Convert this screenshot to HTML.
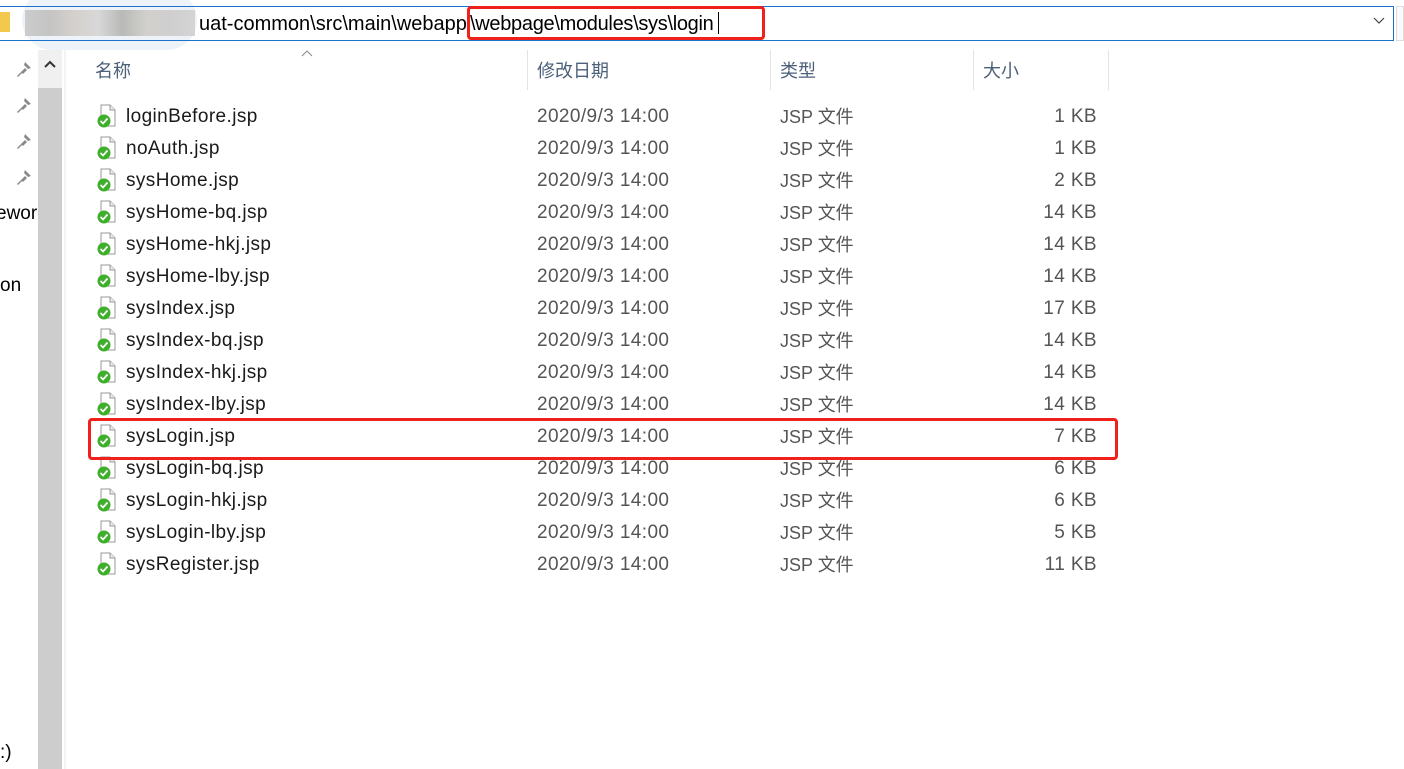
<!DOCTYPE html>
<html><head><meta charset="utf-8"><style>
*{margin:0;padding:0;box-sizing:border-box}
body{width:1404px;height:769px;overflow:hidden;background:#fff;font-family:"Liberation Sans","Noto Sans CJK SC",sans-serif;position:relative;color:#000}
.abs{position:absolute}
.addr{left:-2px;top:6px;width:1396px;height:35px;border:1px solid #1a73c9;border-left:none}
.t{font-size:20px;white-space:nowrap;line-height:24px}
.hdr{color:#4d6079;font-size:18px;top:59px;line-height:24px}
.sep{top:50px;width:1px;height:40px;background:#e3e3e3}
.row{position:absolute;left:0;height:32px;font-size:19px;letter-spacing:0.4px;color:#1a1a1a}
.row span{position:absolute;top:5px;white-space:nowrap;line-height:24px}
.ic{position:absolute;left:97px;top:4px;width:20px;height:24px}
</style></head><body>
<div class="abs" style="left:0;top:12px;width:10px;height:20px;background:#f2c94c"></div>
<div class="abs" style="left:22px;top:-10px;width:175px;height:60px;border-radius:30px;background:#eef3f9"></div>
<div class="abs" style="left:25px;top:10px;width:170px;height:26px;background:linear-gradient(90deg,#ccc,#c4c4c4,#d4d0cc,#d8d8d8,#b8bab8,#d2d0cc,#cfcfcf,#d4d4d4)"></div>
<div class="abs addr"></div>
<div class="abs t" style="left:199px;top:12px">uat-common\src\main\webapp</div>
<div class="abs t" style="left:470px;top:12px;letter-spacing:-0.3px">\webpage\modules\sys\login</div>
<div class="abs" style="left:718px;top:12px;width:1px;height:22px;background:#000"></div>
<div class="abs" style="left:467px;top:6px;width:298px;height:34px;border:3px solid #f0201a;border-radius:4px"></div>
<svg class="abs" style="left:1373px;top:17px" width="12" height="8"><path d="M1 1L6 6L11 1" stroke="#444" fill="none" stroke-width="1.2"/></svg>
<div class="abs" style="left:1396px;top:6px;width:8px;height:35px;border:1px solid #ddd;background:#fafafa"></div>
<div class="abs" style="left:38px;top:50px;width:24px;height:719px;background:#cdcdcd"></div>
<div class="abs" style="left:38px;top:50px;width:24px;height:38px;background:#f0f0f0"></div>
<svg class="abs" style="left:44px;top:60px" width="12" height="8"><path d="M1 7L6 2L11 7" stroke="#333" fill="none" stroke-width="2"/></svg>
<div class="abs" style="left:64px;top:50px;width:2px;height:719px;background:#f3f3f3"></div>
<svg class="abs" style="left:15px;top:58px" width="18" height="130"><g fill="#8a8a8a"><path d="M6 14l4-4 2 2-4 4zM10 4l6 6-3 1-4-4zM2 18l5-5 1 1-5 5z"/><path d="M6 50l4-4 2 2-4 4zM10 40l6 6-3 1-4-4zM2 54l5-5 1 1-5 5z"/><path d="M6 86l4-4 2 2-4 4zM10 76l6 6-3 1-4-4zM2 90l5-5 1 1-5 5z"/><path d="M6 122l4-4 2 2-4 4zM10 112l6 6-3 1-4-4zM2 126l5-5 1 1-5 5z"/></g></svg>
<div class="abs t" style="left:-4px;top:202px;font-size:19px">ewor</div>
<div class="abs t" style="left:0;top:274px;font-size:19px">on</div>
<div class="abs t" style="left:0;top:741px;font-size:19px">:)</div>
<svg class="abs" style="left:301px;top:50px" width="12" height="7"><path d="M1 6L6 1L11 6" stroke="#888" fill="none"/></svg>
<div class="abs hdr" style="left:95px">名称</div>
<div class="abs sep" style="left:527px"></div>
<div class="abs hdr" style="left:537px">修改日期</div>
<div class="abs sep" style="left:770px"></div>
<div class="abs hdr" style="left:780px">类型</div>
<div class="abs sep" style="left:973px"></div>
<div class="abs hdr" style="left:983px">大小</div>
<div class="abs sep" style="left:1108px"></div>
<div id="rows"></div>
<div class="abs" style="left:88px;top:418px;width:1030px;height:42px;border:3px solid #f0201a;border-radius:4px"></div>
<script>
var f=[["loginBefore.jsp",1],["noAuth.jsp",1],["sysHome.jsp",2],["sysHome-bq.jsp",14],["sysHome-hkj.jsp",14],["sysHome-lby.jsp",14],["sysIndex.jsp",17],["sysIndex-bq.jsp",14],["sysIndex-hkj.jsp",14],["sysIndex-lby.jsp",14],["sysLogin.jsp",7],["sysLogin-bq.jsp",6],["sysLogin-hkj.jsp",6],["sysLogin-lby.jsp",5],["sysRegister.jsp",11]];
var h="";f.forEach(function(r,i){var y=100+i*32;
h+='<div class="row" style="top:'+y+'px;width:1120px">'+
'<svg class="ic" viewBox="0 0 20 24"><path d="M4 1h9l5 5v16H4z" fill="#fff" stroke="#999"/><path d="M13 1v5h5" fill="#eee" stroke="#999"/><circle cx="7" cy="17" r="6.5" fill="#3fae2a"/><path d="M3.5 17l2.5 2.5 4.5-5" stroke="#fff" stroke-width="1.8" fill="none"/></svg>'+
'<span style="left:126px">'+r[0]+'</span><span style="left:537px;color:#555">2020/9/3 14:00</span><span style="left:780px;color:#555;font-size:18px;letter-spacing:0">JSP 文件</span><span style="right:23px;color:#555">'+r[1]+' KB</span></div>';});
document.getElementById("rows").innerHTML=h;
</script>
</body></html>
